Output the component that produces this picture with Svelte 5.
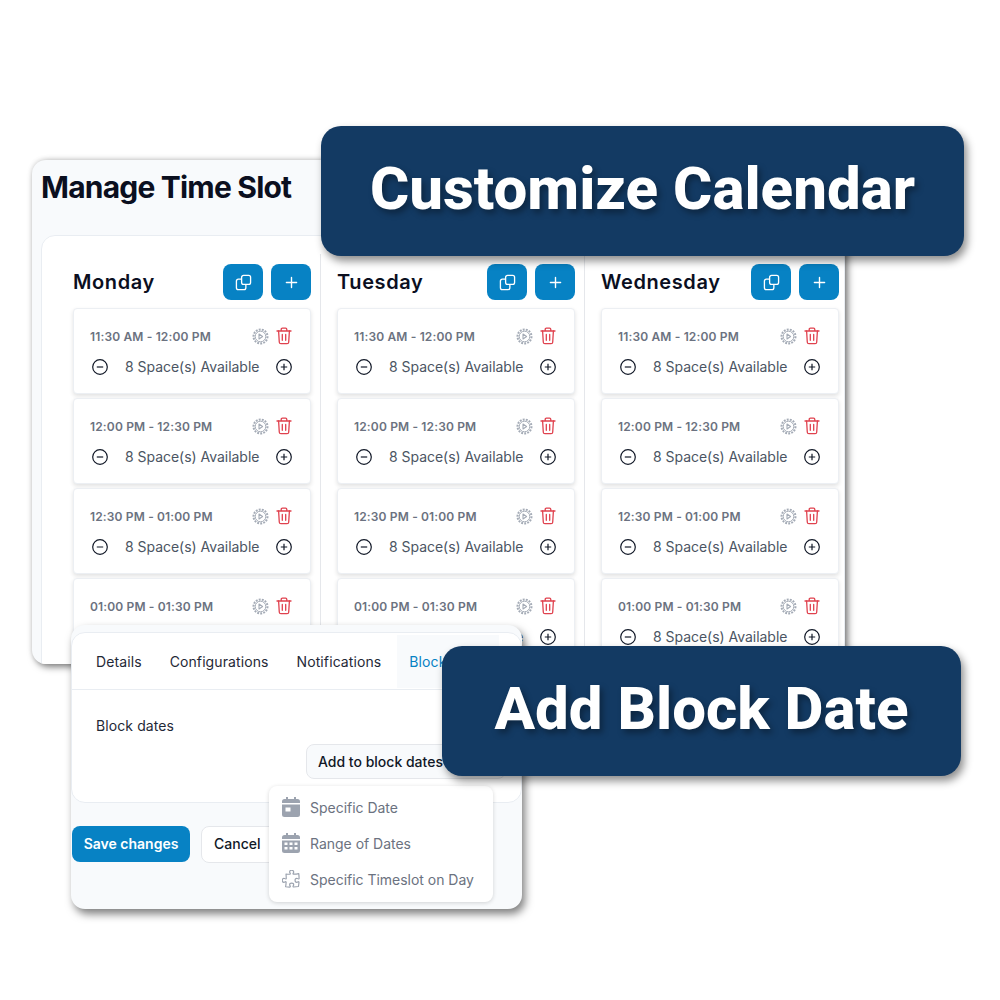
<script lang="ts">
	const days = ['Monday', 'Tuesday', 'Wednesday'];
	const slots = ['11:30 AM - 12:00 PM', '12:00 PM - 12:30 PM', '12:30 PM - 01:00 PM', '01:00 PM - 01:30 PM'];
	const tabs = ['Details', 'Configurations', 'Notifications', 'Block dates'];
</script>

<div class="canvas">
	<section class="manage">
		<h1>Manage Time Slot</h1>
		<div class="board">
			{#each days as day}
				<div class="col">
					<div class="col-head">
						<h2>{day}</h2>
						<button class="sq" aria-label="Copy">
							<svg width="17" height="17" viewBox="0 0 18 18" fill="none" stroke="#fff" stroke-width="1.4">
								<rect x="7" y="1.5" width="9.5" height="9.5" rx="2" />
								<path d="M7 5.5H3.5a2 2 0 0 0-2 2v7a2 2 0 0 0 2 2h6a2 2 0 0 0 2-2V11" />
							</svg>
						</button>
						<button class="sq" aria-label="Add">
							<svg width="13" height="13" viewBox="0 0 14 14" stroke="#fff" stroke-width="1.5" stroke-linecap="round">
								<path d="M7 1.5v11M1.5 7h11" />
							</svg>
						</button>
					</div>
					{#each slots as slot}
						<div class="slot">
							<div class="slot-top">
								<span class="time">{slot}</span>
								<svg class="gear" width="17" height="17" viewBox="0 0 17 17" fill="none" stroke="#a4abb6">
									<circle cx="8.5" cy="8.5" r="7" stroke-width="2" stroke-dasharray="1.9 1.2" />
									<circle cx="8.5" cy="8.5" r="5.3" stroke-width="1" />
									<path d="M7 6l3.6 2.5L7 11z" stroke-width="1.1" stroke-linejoin="round" />
								</svg>
								<svg class="trash" width="16" height="18" viewBox="0 0 16 18" fill="none" stroke="#e0414e" stroke-width="1.3" stroke-linecap="round" stroke-linejoin="round">
									<path d="M1 4h14M5.2 4V2.4A1.2 1.2 0 0 1 6.4 1.2h3.2a1.2 1.2 0 0 1 1.2 1.2V4" />
									<path d="M2.6 4l.7 11.2a1.6 1.6 0 0 0 1.6 1.5h6.2a1.6 1.6 0 0 0 1.6-1.5L13.4 4" />
									<path d="M6.3 7.5v5.8M9.7 7.5v5.8" />
								</svg>
							</div>
							<div class="slot-bottom">
								<svg width="16" height="16" viewBox="0 0 16 16" fill="none" stroke="#111827" stroke-width="1.2">
									<circle cx="8" cy="8" r="7.3" />
									<path d="M4.8 8h6.4" />
								</svg>
								<span class="spaces">8 Space(s) Available</span>
								<svg width="16" height="16" viewBox="0 0 16 16" fill="none" stroke="#111827" stroke-width="1.2">
									<circle cx="8" cy="8" r="7.3" />
									<path d="M4.8 8h6.4M8 4.8v6.4" />
								</svg>
							</div>
						</div>
					{/each}
				</div>
			{/each}
		</div>
	</section>

	<section class="settings">
		<div class="panel">
			<nav class="tabs">
				{#each tabs as tab, i}
					<span class="tab" class:active={i === 3}>{tab}</span>
				{/each}
			</nav>
			<div class="panel-body">
				<div class="label">Block dates</div>
				<div class="add-row">
					<button class="add">Add to block dates</button>
				</div>
			</div>
		</div>
		<div class="actions">
			<button class="save">Save changes</button>
			<button class="cancel">Cancel</button>
		</div>
	</section>

	<div class="menu">
		<div class="item">
			<svg width="18" height="20" viewBox="0 0 18 20" fill="#9ca3af">
				<path d="M4 0h2v2h6V0h2v2h1.5A2.5 2.5 0 0 1 18 4.5V6H0V4.5A2.5 2.5 0 0 1 2.5 2H4z" />
				<path fill-rule="evenodd" d="M0 7.5h18v10a2.5 2.5 0 0 1-2.5 2.5h-13A2.5 2.5 0 0 1 0 17.5zM3.5 10.500v4h5v-4z" />
			</svg>
			Specific Date
		</div>
		<div class="item">
			<svg width="18" height="20" viewBox="0 0 18 20" fill="#9ca3af">
				<path d="M4 0h2v2h6V0h2v2h1.5A2.5 2.5 0 0 1 18 4.5V6H0V4.5A2.5 2.5 0 0 1 2.5 2H4z" />
				<path fill-rule="evenodd" d="M0 7.5h18v10a2.5 2.5 0 0 1-2.5 2.5h-13A2.5 2.5 0 0 1 0 17.5zM2.5 9.5v2.5h3V9.5zM7.5 9.5v2.5h3V9.5zM12.5 9.5v2.5h3V9.5zM2.5 14v2.5h3V14zM7.5 14v2.5h3V14zM12.5 14v2.5h3V14z" />
			</svg>
			Range of Dates
		</div>
		<div class="item">
			<svg width="18" height="18" viewBox="2 2 20 20" fill="none" stroke="#9ca3af" stroke-width="1.3" stroke-linejoin="round">
				<path d="M14.25 6.087c0-.355.186-.676.401-.959.221-.29.349-.634.349-1.003 0-1.036-1.007-1.875-2.25-1.875s-2.25.84-2.25 1.875c0 .369.128.713.349 1.003.215.283.401.604.401.959a.64.64 0 01-.657.643 48.39 48.39 0 01-4.163-.3c.186 1.613.293 3.25.315 4.907a.656.656 0 01-.658.663c-.355 0-.676-.186-.959-.401a1.647 1.647 0 00-1.003-.349c-1.036 0-1.875 1.007-1.875 2.25s.84 2.25 1.875 2.25c.369 0 .713-.128 1.003-.349.283-.215.604-.401.959-.401.31 0 .555.26.532.57a48.039 48.039 0 01-.642 5.056c1.518.19 3.058.309 4.616.354a.64.64 0 00.657-.643c0-.355-.186-.676-.401-.959a1.647 1.647 0 01-.349-1.003c0-1.035 1.008-1.875 2.25-1.875 1.243 0 2.25.84 2.25 1.875 0 .369-.128.713-.349 1.003-.215.283-.4.604-.4.959 0 .333.277.599.61.58a48.1 48.1 0 005.427-.63 48.05 48.05 0 00.582-4.717.532.532 0 00-.533-.57c-.355 0-.676.186-.959.401-.29.221-.634.349-1.003.349-1.035 0-1.875-1.007-1.875-2.25s.84-2.25 1.875-2.25c.37 0 .713.128 1.003.349.283.215.604.401.96.401a.656.656 0 00.658-.663 48.422 48.422 0 00-.37-5.36c-1.886.342-3.81.574-5.766.689a.578.578 0 01-.61-.58z" />
			</svg>
			Specific Timeslot on Day
		</div>
	</div>

	<div class="banner top">Customize Calendar</div>
	<div class="banner bottom">Add Block Date</div>
</div>

<style>
	:global(body) {
		margin: 0;
		background: #fff;
	}
	.canvas {
		position: relative;
		width: 1000px;
		height: 1000px;
		overflow: hidden;
		font-family: Inter, 'Liberation Sans', sans-serif;
		color: #111827;
	}
	button {
		font-family: inherit;
		border: none;
		padding: 0;
	}
	.manage {
		position: absolute;
		left: 32px;
		top: 160px;
		width: 813px;
		height: 504px;
		box-sizing: border-box;
		padding: 8px 0 0 9px;
		background: #f8fafc;
		border-radius: 14px;
		overflow: hidden;
		box-shadow: 3px 3px 7px rgba(0, 0, 0, 0.5), 0 -1px 5px rgba(0, 0, 0, 0.12);
	}
	h1 {
		margin: 0;
		height: 67px;
		font-size: 30px;
		line-height: 38px;
		font-weight: 700;
		letter-spacing: -0.8px;
		color: #0b0f1f;
	}
	.board {
		display: flex;
		gap: 0;
		height: 440px;
		padding: 28px 0 0 31px;
		background: #fff;
		border: 1px solid #e9edf2;
		border-radius: 14px 0 0 0;
		box-sizing: border-box;
	}
	.col {
		width: 238px;
		margin-right: 26px;
		flex: none;
		position: relative;
	}
	.col:not(:last-child)::after {
		content: '';
		position: absolute;
		right: -10px;
		top: -10px;
		bottom: 0;
		width: 1px;
		background: #e5e7eb;
	}
	.col-head {
		display: flex;
		align-items: center;
		gap: 8px;
		height: 36px;
		margin-bottom: 8px;
	}
	h2 {
		flex: 1;
		margin: 0;
		font-size: 20px;
		font-weight: 600;
		letter-spacing: 0.6px;
		color: #0b0f1f;
	}
	.sq {
		width: 40px;
		height: 36px;
		border-radius: 8px;
		background: #0782c4;
		display: grid;
		place-items: center;
	}
	.slot {
		height: 86px;
		box-sizing: border-box;
		margin-bottom: 4px;
		padding: 18px 18px 0 16px;
		background: #fff;
		border: 1px solid #eceff3;
		border-radius: 4px;
		box-shadow: 0 2px 4px rgba(0, 0, 0, 0.12);
	}
	.slot-top {
		display: flex;
		align-items: center;
		height: 18px;
		gap: 7px;
	}
	.time {
		flex: 1;
		font-size: 12px;
		font-weight: 600;
		letter-spacing: 0.15px;
		color: #6b7280;
		white-space: nowrap;
	}
	.gear {
		margin-top: 1px;
	}
	.slot-bottom {
		display: flex;
		align-items: center;
		height: 16px;
		margin-top: 14px;
		padding: 0 0 0 2px;
	}
	.spaces {
		flex: 1;
		margin-left: 17px;
		font-size: 14px;
		line-height: 14px;
		letter-spacing: -0.03px;
		color: #4b5563;
		white-space: nowrap;
	}
	.settings {
		position: absolute;
		left: 71px;
		top: 625px;
		width: 451px;
		height: 284px;
		background: #f8fafc;
		border-radius: 14px;
		box-shadow: 3px 5px 8px rgba(0, 0, 0, 0.5);
		overflow: hidden;
	}
	.panel {
		height: 171px;
		margin-top: 7px;
		background: #fff;
		border: 1px solid #e9edf2;
		border-radius: 14px;
		box-sizing: border-box;
	}
	.tabs {
		display: flex;
		gap: 28px;
		height: 56px;
		padding: 0 0 0 24px;
		align-items: center;
		border-bottom: 1px solid #e9edf2;
		font-size: 14px;
		letter-spacing: 0.1px;
		color: #1f2937;
		white-space: nowrap;
	}
	.tab.active {
		color: #0782c4;
		background: #f8fafc;
		padding: 18px 12px;
		margin-left: -12px;
	}
	.panel-body {
		padding: 27px 0 0 24px;
	}
	.label {
		font-size: 14px;
		line-height: 17px;
		letter-spacing: 0.1px;
		color: #1f2937;
	}
	.add-row {
		margin-top: 10px;
		padding-left: 210px;
	}
	.add {
		height: 35px;
		width: 200px;
		padding: 0 0 0 11px;
		text-align: left;
		background: #f8fafc;
		border: 1px solid #e5e7eb;
		border-radius: 8px;
		font-size: 14px;
		font-weight: 500;
		color: #111827;
	}
	.actions {
		display: flex;
		gap: 11px;
		margin-top: 23px;
		padding-left: 1px;
	}
	.save {
		width: 118px;
		height: 36px;
		padding: 0 0 2px;
		border-radius: 8px;
		background: #0782c4;
		color: #fff;
		font-size: 14px;
		font-weight: 600;
	}
	.cancel {
		width: 80px;
		height: 37px;
		padding: 0 0 2px 12px;
		text-align: left;
		border-radius: 8px;
		background: #fff;
		border: 1px solid #e5e7eb;
		font-size: 14px;
		font-weight: 500;
		color: #111827;
	}
	.menu {
		position: absolute;
		left: 269px;
		top: 786px;
		width: 224px;
		height: 116px;
		box-sizing: border-box;
		padding: 3px 0;
		background: #fff;
		border-radius: 8px;
		box-shadow: 0 1px 4px rgba(0, 0, 0, 0.16);
	}
	.item {
		display: flex;
		align-items: center;
		gap: 10px;
		height: 36px;
		padding-left: 13px;
		font-size: 14px;
		letter-spacing: -0.02px;
		color: #6b7280;
		white-space: nowrap;
	}
	.banner {
		position: absolute;
		height: 130px;
		box-sizing: border-box;
		padding-bottom: 6px;
		display: flex;
		align-items: center;
		justify-content: center;
		background: #133a63;
		border-radius: 20px;
		box-shadow: 3px 5px 8px rgba(0, 0, 0, 0.45);
		font-family: Roboto, 'Liberation Sans', sans-serif;
		font-size: 60px;
		font-weight: 800;
		color: #fff;
		text-shadow: 3px 4px 6px rgba(0, 0, 0, 0.35);
		white-space: nowrap;
	}
	.top {
		left: 321px;
		top: 126px;
		width: 643px;
	}
	.bottom {
		left: 442px;
		top: 646px;
		width: 519px;
	}
</style>
